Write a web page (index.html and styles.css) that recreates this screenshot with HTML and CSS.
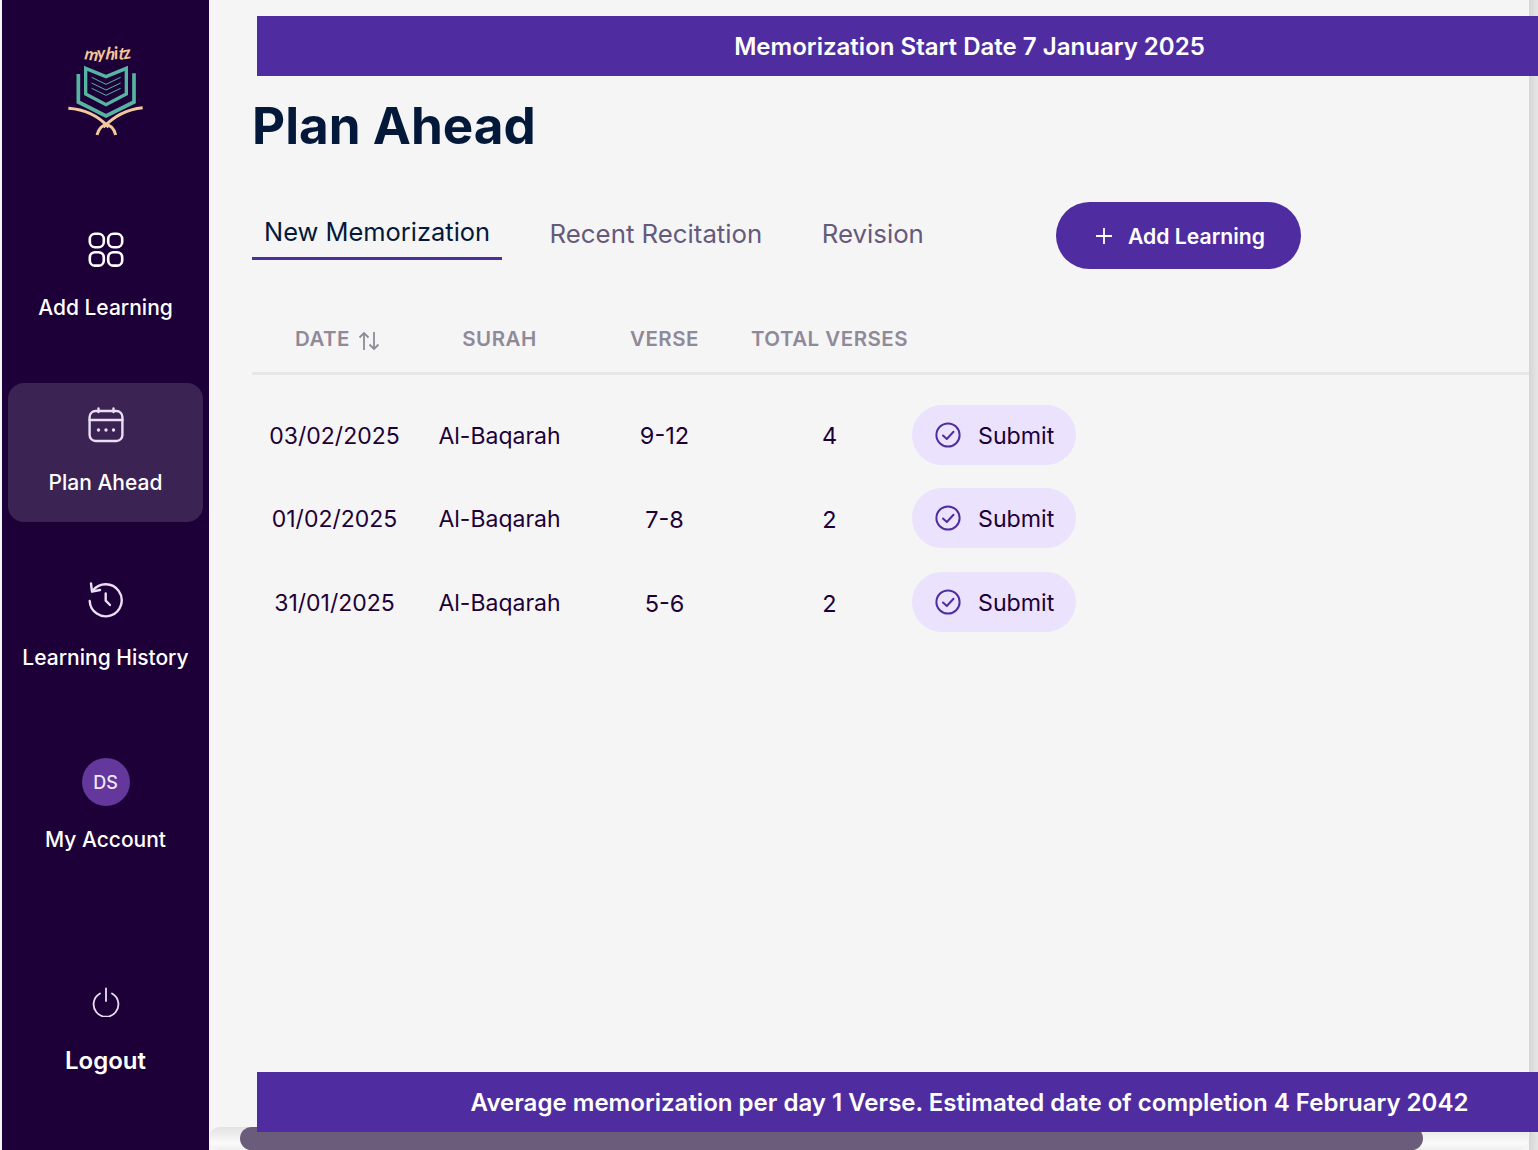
FILE: index.html
```html
<!DOCTYPE html>
<html lang="en">
<head>
<meta charset="utf-8">
<title>Plan Ahead</title>
<link rel="stylesheet" href="styles.css">
</head>
<body>
<div class="app">
  <aside class="rail">
    <div class="logo">
      <svg class="logo-svg" viewBox="0 0 330 360" width="110" height="120" fill="none">
        <text class="logo-text" x="102" y="88" rotate="8 -4 6 -6 4 -10">myhitz</text>
        <path d="M107 115 L168 140 L229 115 L229 192 L168 224 L107 192 Z" stroke="#55b5a0" stroke-width="10"/>
        <path d="M85 132 V216 L168 258 L252 216 V130" stroke="#55b5a0" stroke-width="11"/>
        <path d="M125 142 L168 163 L212 142 M125 159 L168 180 L212 159 M125 175 L168 196 L212 175" stroke="#55b5a0" stroke-width="3"/>
        <path d="M55 235 C105 238 145 258 176 292 M278 233 C230 238 192 258 160 292" stroke="#f2c89c" stroke-width="9"/>
        <path d="M141 315 C146 295 158 285 168 285 C180 285 192 295 197 315" stroke="#f2c89c" stroke-width="9"/>
      </svg>
    </div>
    <nav class="nav">
      <a class="nav-item">
        <svg class="nav-icon" viewBox="0 0 36 36" fill="none" stroke="#fff" stroke-width="2.6">
          <rect x="1.8" y="1.8" width="14" height="13.4" rx="5.2"/><rect x="20.2" y="1.8" width="14" height="13.4" rx="5.2"/>
          <rect x="1.8" y="20.2" width="14" height="13.4" rx="5.2"/><rect x="20.2" y="20.2" width="14" height="13.4" rx="5.2"/>
        </svg>
        <span class="nav-label">Add Learning</span>
      </a>
      <a class="nav-item nav-item-active">
        <svg class="nav-icon" viewBox="0 0 36 36" fill="none" stroke="#eadff5" stroke-width="2.4" stroke-linecap="round">
          <rect x="1.6" y="4" width="32.8" height="30" rx="6"/><path d="M1.6 13H34.4M10.5 1.5V5M25.5 1.5V5"/>
          <circle cx="10.5" cy="23" r="1.7" fill="#eadff5" stroke="none"/><circle cx="18" cy="23" r="1.7" fill="#eadff5" stroke="none"/><circle cx="25.5" cy="23" r="1.7" fill="#eadff5" stroke="none"/>
        </svg>
        <span class="nav-label">Plan Ahead</span>
      </a>
      <a class="nav-item">
        <svg class="nav-icon" viewBox="0 0 36 36" fill="none" stroke="#eadff5" stroke-width="2.4" stroke-linecap="round" stroke-linejoin="round">
          <path d="M5 8.5 A16 16 0 1 1 1.7 19"/><path d="M3 1.5 L4 9.7 L12 8"/><path d="M17.7 11.5 V18.7 L22 23"/>
        </svg>
        <span class="nav-label">Learning History</span>
      </a>
      <a class="nav-item nav-item-account">
        <span class="avatar">DS</span>
        <span class="nav-label">My Account</span>
      </a>
      <a class="nav-item nav-item-logout">
        <svg class="power-icon" viewBox="0 0 28 30" fill="none" stroke="#eadff5" stroke-width="1.8" stroke-linecap="round">
          <path d="M14 1.5V14"/><path d="M8 6.5 A12.4 12.4 0 1 0 20 6.5"/>
        </svg>
        <span class="logout-label">Logout</span>
      </a>
    </nav>
  </aside>

  <main class="main">
    <h1 class="title">Plan Ahead</h1>
    <div class="tabs">
      <a class="tab tab-active">New Memorization</a>
      <a class="tab">Recent Recitation</a>
      <a class="tab tab-rev">Revision</a>
      <button class="add-btn">
        <svg class="plus" viewBox="0 0 18 18" fill="none" stroke="#fff" stroke-width="1.8"><path d="M9 1V17M1 9H17"/></svg>
        Add Learning
      </button>
    </div>
    <table class="plan">
      <thead>
        <tr>
          <th><span class="th-date">DATE
            <svg class="sort" viewBox="0 0 22 20" fill="none" stroke="#8f8a99" stroke-width="1.8"><path d="M6 19V2M1.5 6.5L6 2L10.5 6.5M16 1V18M11.5 13.5L16 18L20.5 13.5"/></svg></span></th>
          <th>SURAH</th>
          <th>VERSE</th>
          <th>TOTAL VERSES</th>
          <th class="th-blank"></th>
        </tr>
      </thead>
      <tbody>
        <tr>
          <td>03/02/2025</td><td>Al-Baqarah</td><td>9-12</td><td>4</td>
          <td class="td-action"><button class="submit"><svg class="check" viewBox="0 0 26 26" fill="none" stroke="#4f2da0" stroke-width="2" stroke-linecap="round" stroke-linejoin="round"><circle cx="13" cy="13" r="11.6"/><path d="M8 13.5L11.8 17L18.5 9.8"/></svg>Submit</button></td>
        </tr>
        <tr>
          <td>01/02/2025</td><td>Al-Baqarah</td><td>7-8</td><td>2</td>
          <td class="td-action"><button class="submit"><svg class="check" viewBox="0 0 26 26" fill="none" stroke="#4f2da0" stroke-width="2" stroke-linecap="round" stroke-linejoin="round"><circle cx="13" cy="13" r="11.6"/><path d="M8 13.5L11.8 17L18.5 9.8"/></svg>Submit</button></td>
        </tr>
        <tr>
          <td>31/01/2025</td><td>Al-Baqarah</td><td>5-6</td><td>2</td>
          <td class="td-action"><button class="submit"><svg class="check" viewBox="0 0 26 26" fill="none" stroke="#4f2da0" stroke-width="2" stroke-linecap="round" stroke-linejoin="round"><circle cx="13" cy="13" r="11.6"/><path d="M8 13.5L11.8 17L18.5 9.8"/></svg>Submit</button></td>
        </tr>
      </tbody>
    </table>
  </main>
</div>

<div class="vbar"></div>
<div class="hbar"><div class="hthumb"></div></div>
<div class="banner banner-top">Memorization Start Date 7 January 2025</div>
<div class="banner banner-bottom">Average memorization per day 1 Verse. Estimated date of completion 4 February 2042</div>
</body>
</html>
```
FILE: styles.css
```css
* { box-sizing: border-box; }
html, body { margin: 0; height: 100%; }
body {
  width: 1538px; height: 1150px; overflow: hidden; position: relative;
  background: #f5f5f5; font-family: Inter, "Liberation Sans", sans-serif; color: #1e0039;
}
.app { display: flex; height: 1150px; padding-left: 2px; background: #f5f5f5; }
.rail { width: 207px; flex: none; background: #1e0039; display: flex; flex-direction: column; }
.logo { height: 208px; padding-top: 30px; display: flex; justify-content: center; }
.logo-svg { display: block; margin-left: -1px; }
.logo-text { font-family: "Lato", sans-serif; font-style: italic; font-weight: 700; font-size: 52px; letter-spacing: -1px; fill: #f2c89c; }
.nav { display: flex; flex-direction: column; padding: 0 6px; gap: 36px; }
.nav-item { height: 139px; padding-top: 24px; border-radius: 16px; display: flex; flex-direction: column; align-items: center; }
.nav-item-active { background: #3b2353; }
.nav-icon { width: 36px; height: 36px; display: block; }
.nav-label { margin-top: 28px; color: #fff; font-size: 21px; font-weight: 500; line-height: 24px; white-space: nowrap; }
.nav-item-account { margin-top: 1px; }
.avatar { width: 48px; height: 48px; border-radius: 50%; background: #63379b; color: #f0e6fa; font-size: 18px; font-weight: 500; display: flex; align-items: center; justify-content: center; }
.nav-item-account .nav-label { margin-top: 22px; }
.nav-item-logout { margin-top: 78px; padding-top: 0; }
.power-icon { width: 28px; height: 30px; display: block; }
.logout-label { margin-top: 30px; color: #fff; font-size: 24px; font-weight: 600; line-height: 28px; }

.main { flex: 1; min-width: 0; padding: 90px 0 0 43px; }
.title { margin: 0; color: #04193a; font-size: 51.2px; font-weight: 700; line-height: 70px; }
.tabs { display: flex; align-items: center; margin-top: 42px; height: 67px; }
.tab { color: #655a7c; font-size: 25.8px; line-height: 32px; padding: 0 12px; margin-bottom: 4px; margin-right: 36px; }
.tab-active { color: #04193a; font-size: 25.45px; font-weight: 400; border-bottom: 3px solid #4f2da0; height: 44px; margin-top: 4px; margin-bottom: 0; margin-right: 35.5px; }
.tab-rev { margin-right: 120px; margin-left: -0.5px; }
.add-btn {
  width: 245px; height: 67px; border: 0; border-radius: 34px; background: #4f2da0; color: #fff;
  font: 600 21.2px Inter, sans-serif; display: flex; align-items: center; gap: 15px; padding: 0 0 0 39px;
}
.plus { width: 18px; height: 18px; }
.plan { border-collapse: collapse; table-layout: fixed; width: 1277px; margin-top: 36px; }
.plan th, .plan td { width: 165px; padding: 0; text-align: center; font-weight: 400; }
.plan th { height: 68px; color: #8f8a99; font-size: 20.5px; font-weight: 600; letter-spacing: .5px; border-bottom: 3px solid #e7e7e7; white-space: nowrap; }
.plan th.th-blank { width: auto; }
.th-date { display: inline-flex; align-items: center; gap: 8px; margin-left: 6px; }
.sort { width: 22px; height: 20px; margin-top: 5px; }
.plan td { height: 84px; font-size: 23px; }
.plan td:nth-child(n+3) { font-size: 23.5px; }
.plan tbody tr:first-child td { height: 104px; padding-top: 20px; }
.plan td.td-action { width: auto; text-align: left; }
.submit {
  width: 163.5px; height: 60px; border: 0; border-radius: 30px; background: #ebe2fd; color: #1e0039;
  font: 400 23.2px Inter, sans-serif; display: flex; align-items: center; padding: 2px 0 0 23px; gap: 17px; margin-bottom: 2px;
}
.check { width: 26px; height: 26px; margin-top: -2px; }

.banner {
  position: absolute; left: 257px; width: 1425px; height: 60px; background: #4f2da0; color: #fff;
  font-size: 24.05px; font-weight: 600; display: flex; align-items: center; justify-content: center; white-space: nowrap;
}
.banner-top { top: 16px; }
.banner-bottom { top: 1072px; }
.vbar { position: absolute; left: 1529px; top: 0; width: 9px; height: 1150px; background: linear-gradient(90deg, #d6d6d6, #e6e6e6); }
.hbar { position: absolute; left: 209px; top: 1127px; width: 1320px; height: 23px; border-radius: 12px; background: linear-gradient(180deg, #e2e2e2, #fbfbfb 70%, #eeeeee); }
.hthumb { position: absolute; left: 31px; top: 0; width: 1183px; height: 23px; border-radius: 12px; background: #6c5c7c; }
```
